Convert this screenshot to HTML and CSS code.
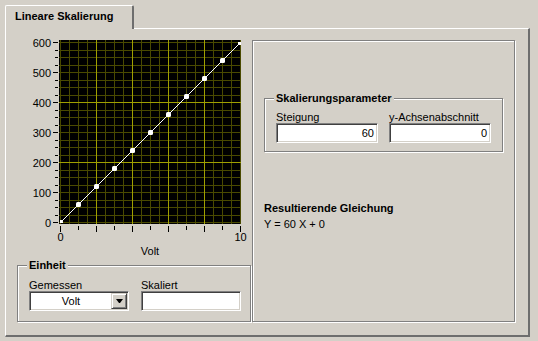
FILE: index.html
```html
<!DOCTYPE html>
<html>
<head>
	<meta charset="utf-8">
	<title>Lineare Skalierung</title>
	<link rel="stylesheet" href="styles.css">
</head>
<body>
	<div id="window">
		<div class="tab">Lineare Skalierung</div>
		<div id="panel">
			<div id="left-col">
				<svg id="graph" width="234" height="225" viewBox="17 40 234 225">
					<defs>
						<clipPath id="plot-clip"><rect x="60" y="42" width="181" height="181"/></clipPath>
					</defs>
					<rect x="59" y="40" width="182" height="184" fill="#000"/>
					<g id="grid"></g>
					<g id="ticks"></g>
					<g class="axis-text">
						<text x="51" y="46.5" text-anchor="end">600</text>
						<text x="51" y="76.5" text-anchor="end">500</text>
						<text x="51" y="106.5" text-anchor="end">400</text>
						<text x="51" y="136.5" text-anchor="end">300</text>
						<text x="51" y="166.5" text-anchor="end">200</text>
						<text x="51" y="196.5" text-anchor="end">100</text>
						<text x="51" y="226.5" text-anchor="end">0</text>
						<text x="60.5" y="241" text-anchor="middle">0</text>
						<text x="240.5" y="241" text-anchor="middle">10</text>
						<text x="150" y="255" text-anchor="middle">Volt</text>
					</g>
					<g id="plot" clip-path="url(#plot-clip)">
						<line class="curve" x1="60.5" y1="222.5" x2="240.5" y2="42.5"/>
					</g>
				</svg>
				<div class="group" id="einheit">
					<div class="group-title">Einheit</div>
					<div class="field-row">
						<div class="field-col">
							<div class="label">Gemessen</div>
							<div class="combo">
								<span class="combo-text">Volt</span>
								<span class="combo-btn"><span class="arrow"></span></span>
							</div>
						</div>
						<div class="field-col">
							<div class="label">Skaliert</div>
							<div class="textbox"></div>
						</div>
					</div>
				</div>
			</div>
			<div id="right-panel">
				<div class="group" id="params">
					<div class="group-title">Skalierungsparameter</div>
					<div class="field-row wide">
						<div class="field-col">
							<div class="label">Steigung</div>
							<div class="textbox">60</div>
						</div>
						<div class="field-col">
							<div class="label">y-Achsenabschnitt</div>
							<div class="textbox">0</div>
						</div>
					</div>
				</div>
				<div class="result-title">Resultierende Gleichung</div>
				<div class="result">Y = 60 X + 0</div>
			</div>
		</div>
	</div>
	<script>
		var ns = "http://www.w3.org/2000/svg";
		function X(v) { return 60.5 + 18 * v; }
		function Y(val) { return Math.round(222 - 0.3 * val) + 0.5; }
		function line(parent, x1, y1, x2, y2, cls) {
			var l = document.createElementNS(ns, "line");
			l.setAttribute("x1", x1);
			l.setAttribute("y1", y1);
			l.setAttribute("x2", x2);
			l.setAttribute("y2", y2);
			l.setAttribute("class", cls);
			parent.appendChild(l);
		}

		var grid = document.getElementById("grid");
		var ticks = document.getElementById("ticks");
		var plot = document.getElementById("plot");

		// minor grid first, major on top (edges stay minor)
		for (var k = 0; k <= 24; k++) {
			if (k % 8 !== 0 || k === 0 || k === 24) line(grid, 59, Y(k * 25), 241, Y(k * 25), "minor");
		}
		for (var k = 0; k <= 20; k++) {
			if (k % 4 !== 0 || k === 0 || k === 20) line(grid, X(k / 2), 40, X(k / 2), 224, "minor");
		}
		for (var k = 8; k < 24; k += 8) {
			line(grid, 59, Y(k * 25), 241, Y(k * 25), "major");
		}
		for (var k = 4; k < 20; k += 4) {
			line(grid, X(k / 2), 40, X(k / 2), 224, "major");
		}

		for (var k = 0; k <= 24; k++) {
			line(ticks, k % 4 === 0 ? 53 : 55, Y(k * 25), 58, Y(k * 25), "tick");
		}
		for (var v = 0; v <= 10; v++) {
			line(ticks, X(v), 226, X(v), v % 2 === 0 ? 232 : 230, "tick");
		}

		for (var v = 0; v <= 10; v++) {
			var r = document.createElementNS(ns, "rect");
			r.setAttribute("x", X(v) - 2.5);
			r.setAttribute("y", 222.5 - 18 * v - 2.5);
			r.setAttribute("width", 5);
			r.setAttribute("height", 5);
			r.setAttribute("rx", 1.5);
			r.setAttribute("class", "dot");
			plot.appendChild(r);
		}
	</script>
</body>
</html>
```

FILE: styles.css
```css
body {
	margin: 0;
	background-color: #d4d0c8;
	font-family: "Liberation Sans", Arial, sans-serif;
	font-size: 11px;
	color: #000;
}
#window {
	display: flex;
	flex-direction: column;
	padding: 5px 0 0 5px;
	width: 525px;
}
.tab {
	z-index: 1;
	align-self: flex-start;
	box-sizing: border-box;
	width: 129px;
	height: 24px;
	margin-bottom: -1px;
	padding: 4px 0 0 9px;
	background-color: #d4d0c8;
	border-top: 1px solid #fff;
	border-left: 1px solid #fff;
	border-right: 2px solid #6e6e6e;
	border-top-left-radius: 2px;
	border-top-right-radius: 2px;
	font-weight: bold;
	line-height: 13px;
}
#panel {
	display: flex;
	box-sizing: border-box;
	width: 525px;
	height: 309px;
	padding: 11px 12px 12px 11px;
	border-top: 1px solid #fff;
	border-left: 1px solid #fff;
	border-right: 2px solid #6e6e6e;
	border-bottom: 2px solid #6e6e6e;
}
#left-col {
	display: flex;
	flex-direction: column;
	width: 235px;
	flex-shrink: 0;
}
#graph {
	display: block;
	overflow: visible;
}
#graph .minor {
	stroke: #4a4a00;
	stroke-width: 1;
}
#graph .major {
	stroke: #a0a000;
	stroke-width: 1;
}
#graph .tick {
	stroke: #000;
	stroke-width: 1;
}
#graph .curve {
	stroke: #fff;
	stroke-width: 1;
}
#graph .dot {
	fill: #fff;
}
.axis-text {
	font-family: "Liberation Sans", Arial, sans-serif;
	font-size: 11px;
	fill: #000;
}

.group {
	box-sizing: border-box;
	border: 1px solid #808080;
	box-shadow: inset 1px 1px #fff, 1px 1px #fff;
}
.group-title {
	align-self: flex-start;
	margin: -7px 0 0 -2px;
	padding: 0 2px;
	background-color: #d4d0c8;
	font-weight: bold;
	line-height: 13px;
}
#einheit {
	display: flex;
	flex-direction: column;
	width: 234px;
	height: 57px;
	padding: 0 11px;
}
#params {
	display: flex;
	flex-direction: column;
	width: 239px;
	height: 54px;
	padding: 0 11px;
}
.field-row {
	display: flex;
	gap: 12px;
	margin-top: 7px;
}
.field-row.wide {
	gap: 11px;
	margin-top: 6px;
}
.label {
	line-height: 12px;
	white-space: nowrap;
}
.textbox {
	box-sizing: border-box;
	width: 100px;
	height: 20px;
	padding: 0 3px;
	background-color: #fff;
	border-top: 1px solid #808080;
	border-left: 1px solid #808080;
	border-bottom: 1px solid #fff;
	border-right: 1px solid #fff;
	box-shadow: inset 1px 1px #404040, inset -1px -1px #d4d0c8;
	text-align: right;
	line-height: 18px;
}
.wide .textbox {
	width: 102px;
}
.combo {
	display: flex;
	box-sizing: border-box;
	width: 100px;
	height: 20px;
	padding: 1px;
	background-color: #fff;
	border-top: 1px solid #808080;
	border-left: 1px solid #808080;
	border-bottom: 1px solid #fff;
	border-right: 1px solid #fff;
	box-shadow: inset 1px 1px #404040, inset -1px -1px #d4d0c8;
}
.combo-text {
	flex: 1;
	text-align: center;
	line-height: 16px;
}
.combo-btn {
	display: flex;
	align-items: center;
	justify-content: center;
	box-sizing: border-box;
	width: 16px;
	height: 16px;
	background-color: #d4d0c8;
	border: 1px solid;
	border-color: #d4d0c8 #404040 #404040 #d4d0c8;
	box-shadow: inset 1px 1px #fff, inset -1px -1px #808080;
}
.arrow {
	width: 1px;
	height: 0;
	border-left: 3px solid transparent;
	border-right: 3px solid transparent;
	border-top: 4px solid #000;
}

#right-panel {
	box-sizing: border-box;
	width: 263px;
	height: 282px;
	flex-shrink: 0;
	padding: 57px 0 0 11px;
	border: 1px solid #808080;
	box-shadow: inset 1px 1px #fff, 1px 1px #fff;
}
.result-title {
	margin-top: 50px;
	font-weight: bold;
	line-height: 13px;
}
.result {
	margin-top: 3px;
	line-height: 13px;
}
```
